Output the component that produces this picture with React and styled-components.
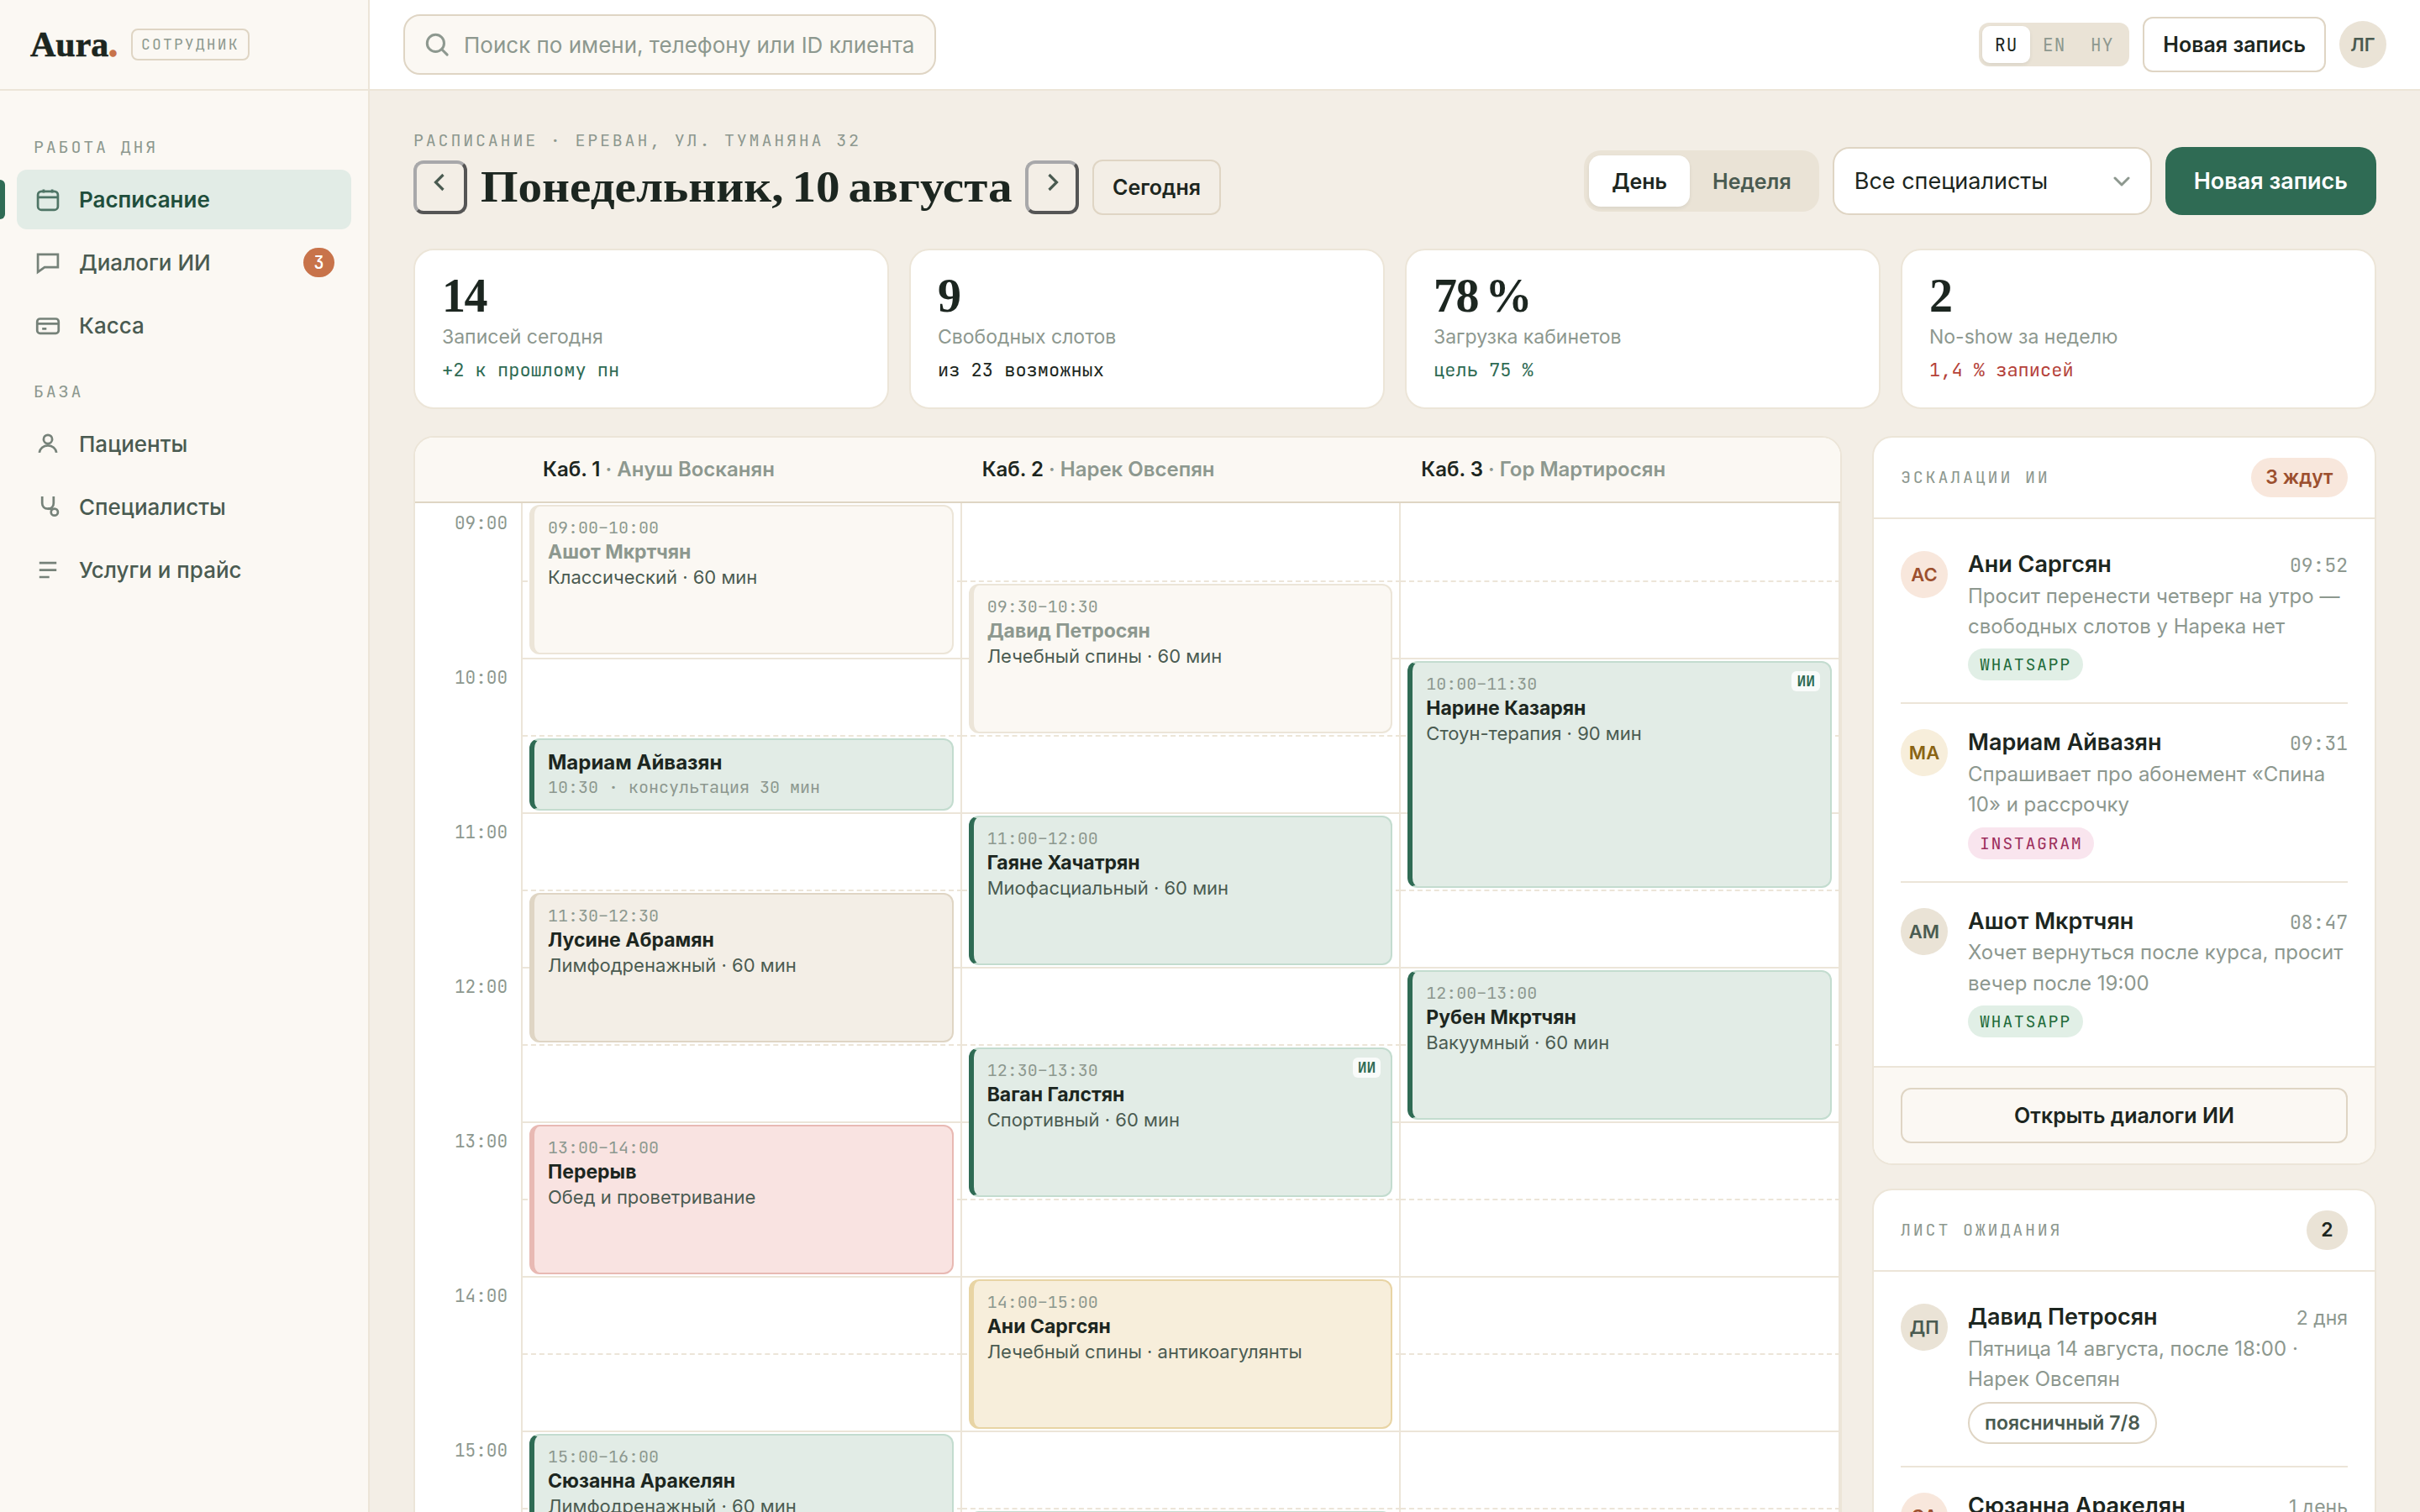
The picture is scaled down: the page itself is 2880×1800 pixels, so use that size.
import React, { useState } from 'react';
import styled, { createGlobalStyle, css } from 'styled-components';

const sans = "Inter, 'Noto Sans', sans-serif";
const mono = "'JetBrains Mono', 'DejaVu Sans Mono', monospace";
const serif = "'Liberation Serif', serif";

const c = {
  ink: '#1c2620',
  text: '#4a5b51',
  muted: '#8d988f',
  line: '#ece5d8',
  lineStrong: '#dfd5c4',
  paper: '#fbf8f3',
  sand: '#f3eee6',
  sandDark: '#eae3d6',
  green: '#2f6b54',
  greenDark: '#1f4e3c',
  greenSoft: '#e2ece6',
  clay: '#c8734a',
  claySoft: '#f8e7dc',
  clayDark: '#9c4f2e',
  red: '#b5423a',
};

const NAV = [
  {
    title: 'Работа дня',
    items: [
      { id: 'schedule', label: 'Расписание', icon: 'calendar' },
      { id: 'chats', label: 'Диалоги ИИ', icon: 'chat', count: 3 },
      { id: 'cash', label: 'Касса', icon: 'card' },
    ],
  },
  {
    title: 'База',
    items: [
      { id: 'patients', label: 'Пациенты', icon: 'user' },
      { id: 'staff', label: 'Специалисты', icon: 'stethoscope' },
      { id: 'services', label: 'Услуги и прайс', icon: 'list' },
    ],
  },
];

const STATS = [
  { value: '14', label: 'Записей сегодня', note: '+2 к прошлому пн', tone: 'good' },
  { value: '9', label: 'Свободных слотов', note: 'из 23 возможных' },
  { value: '78 %', label: 'Загрузка кабинетов', note: 'цель 75 %', tone: 'good' },
  { value: '2', label: 'No-show за неделю', note: '1,4 % записей', tone: 'bad' },
];

const HOURS = ['09:00', '10:00', '11:00', '12:00', '13:00', '14:00', '15:00', '16:00'];
const SLOTS = HOURS.flatMap((h) => [h, h.replace(':00', ':30')]);

// span — количество получасовых слотов
const ROOMS = [
  {
    name: 'Каб. 1',
    person: 'Ануш Восканян',
    events: {
      '09:00': { span: 2, kind: 'done', time: '09:00–10:00', name: 'Ашот Мкртчян', note: 'Классический · 60 мин' },
      '10:30': { span: 1, kind: 'active', name: 'Мариам Айвазян', short: '10:30 · консультация 30 мин' },
      '11:30': { span: 2, kind: 'plain', time: '11:30–12:30', name: 'Лусине Абрамян', note: 'Лимфодренажный · 60 мин' },
      '13:00': { span: 2, kind: 'break', time: '13:00–14:00', name: 'Перерыв', note: 'Обед и проветривание' },
      '15:00': { span: 2, kind: 'active', time: '15:00–16:00', name: 'Сюзанна Аракелян', note: 'Лимфодренажный · 60 мин' },
    },
  },
  {
    name: 'Каб. 2',
    person: 'Нарек Овсепян',
    events: {
      '09:30': { span: 2, kind: 'done', time: '09:30–10:30', name: 'Давид Петросян', note: 'Лечебный спины · 60 мин' },
      '11:00': { span: 2, kind: 'active', time: '11:00–12:00', name: 'Гаяне Хачатрян', note: 'Миофасциальный · 60 мин' },
      '12:30': { span: 2, kind: 'active', time: '12:30–13:30', name: 'Ваган Галстян', note: 'Спортивный · 60 мин', ai: true },
      '14:00': { span: 2, kind: 'warn', time: '14:00–15:00', name: 'Ани Саргсян', note: 'Лечебный спины · антикоагулянты' },
      '15:30': { span: 2, kind: 'active' },
    },
  },
  {
    name: 'Каб. 3',
    person: 'Гор Мартиросян',
    events: {
      '10:00': { span: 3, kind: 'active', time: '10:00–11:30', name: 'Нарине Казарян', note: 'Стоун-терапия · 90 мин', ai: true },
      '12:00': { span: 2, kind: 'active', time: '12:00–13:00', name: 'Рубен Мкртчян', note: 'Вакуумный · 60 мин' },
    },
  },
];

const ESCALATIONS = [
  { initials: 'АС', tone: 'clay', name: 'Ани Саргсян', time: '09:52', text: 'Просит перенести четверг на утро — свободных слотов у Нарека нет', channel: 'WhatsApp' },
  { initials: 'МА', tone: 'gold', name: 'Мариам Айвазян', time: '09:31', text: 'Спрашивает про абонемент «Спина 10» и рассрочку', channel: 'Instagram' },
  { initials: 'АМ', tone: 'sand', name: 'Ашот Мкртчян', time: '08:47', text: 'Хочет вернуться после курса, просит вечер после 19:00', channel: 'WhatsApp' },
];

const WAITING = [
  { initials: 'ДП', tone: 'sand', name: 'Давид Петросян', time: '2 дня', text: 'Пятница 14 августа, после 18:00 · Нарек Овсепян', tag: 'поясничный 7/8' },
  { initials: 'СА', tone: 'clay', name: 'Сюзанна Аракелян', time: '1 день', text: 'Любой вечер на этой неделе', tag: 'лимфодренаж' },
];

const ICONS = {
  calendar: (
    <>
      <rect x="3" y="4" width="14" height="13" rx="2.5" />
      <path d="M3 8.2h14M7 2.6V5M13 2.6V5" />
    </>
  ),
  chat: <path d="M3 4h14v9H7.7L3 16.4z" />,
  card: (
    <>
      <rect x="2.5" y="5" width="15" height="10.2" rx="2" />
      <path d="M2.5 8.4h15M6 12h3" />
    </>
  ),
  user: (
    <>
      <circle cx="10" cy="7" r="3" />
      <path d="M4 16.4c.4-3 2.9-5 6-5s5.6 2 6 5" />
    </>
  ),
  stethoscope: (
    <>
      <path d="M6 3v4.6c0 2.3 1.5 4 4 4s4-1.7 4-4V3" />
      <path d="M10 11.6h2.6" />
      <circle cx="14.6" cy="13.9" r="2.4" />
    </>
  ),
  list: <path d="M4 4.8h12M4 9.8h12M4 14.7h7" />,
};

const App = () => {
  const [page, setPage] = useState('schedule');
  const [view, setView] = useState('День');
  const [lang, setLang] = useState('RU');

  return (
    <>
      <GlobalStyle />
      <Shell>
        <Sidebar>
          <Brand>
            <Logo>
              Aura<LogoDot>.</LogoDot>
            </Logo>
            <RoleTag>Сотрудник</RoleTag>
          </Brand>
          <Nav>
            {NAV.map((group) => (
              <NavGroup key={group.title}>
                <NavTitle>{group.title}</NavTitle>
                {group.items.map((item) => (
                  <NavItem key={item.id} $active={page === item.id} onClick={() => setPage(item.id)}>
                    <NavIcon viewBox="0 0 20 20">{ICONS[item.icon]}</NavIcon>
                    {item.label}
                    {item.count && <NavCount>{item.count}</NavCount>}
                  </NavItem>
                ))}
              </NavGroup>
            ))}
          </Nav>
        </Sidebar>

        <Main>
          <Topbar>
            <Search>
              <SearchIcon viewBox="0 0 20 20">
                <circle cx="9" cy="9" r="6.3" />
                <path d="M13.6 13.6l4 4" />
              </SearchIcon>
              <SearchInput placeholder="Поиск по имени, телефону или ID клиента" />
            </Search>
            <TopActions>
              <LangSwitch>
                {['RU', 'EN', 'HY'].map((l) => (
                  <LangButton key={l} $active={lang === l} onClick={() => setLang(l)}>
                    {l}
                  </LangButton>
                ))}
              </LangSwitch>
              <OutlineButton>Новая запись</OutlineButton>
              <Avatar $tone="sand">ЛГ</Avatar>
            </TopActions>
          </Topbar>

          <Content>
            <PageHead>
              <div>
                <Crumbs>Расписание · Ереван, ул. Туманяна 32</Crumbs>
                <DateRow>
                  <ArrowButton aria-label="Предыдущий день">
                    <svg width="32" height="32" viewBox="0 0 32 32">
                      <path d="M19.5 7l-9 9 9 9" />
                    </svg>
                  </ArrowButton>
                  <Title>Понедельник, 10 августа</Title>
                  <ArrowButton aria-label="Следующий день">
                    <svg width="32" height="32" viewBox="0 0 32 32">
                      <path d="M12.5 7l9 9-9 9" />
                    </svg>
                  </ArrowButton>
                  <OutlineButton>Сегодня</OutlineButton>
                </DateRow>
              </div>
              <HeadActions>
                <ViewSwitch>
                  {['День', 'Неделя'].map((v) => (
                    <ViewButton key={v} $active={view === v} onClick={() => setView(v)}>
                      {v}
                    </ViewButton>
                  ))}
                </ViewSwitch>
                <SelectBox>
                  Все специалисты
                  <svg width="20" height="12" viewBox="0 0 20 12">
                    <path d="M2 2l8 8 8-8" />
                  </svg>
                </SelectBox>
                <PrimaryButton>Новая запись</PrimaryButton>
              </HeadActions>
            </PageHead>

            <Stats>
              {STATS.map((s) => (
                <StatCard key={s.label}>
                  <StatValue>{s.value}</StatValue>
                  <StatLabel>{s.label}</StatLabel>
                  <StatNote $tone={s.tone}>{s.note}</StatNote>
                </StatCard>
              ))}
            </Stats>

            <Board>
              <Schedule>
                <ScheduleHead>
                  <span />
                  {ROOMS.map((room) => (
                    <RoomHead key={room.name}>
                      {room.name} <span>· {room.person}</span>
                    </RoomHead>
                  ))}
                </ScheduleHead>
                <ScheduleBody>
                  <HourColumn>
                    {HOURS.map((h) => (
                      <Hour key={h}>{h}</Hour>
                    ))}
                  </HourColumn>
                  {ROOMS.map((room) => (
                    <RoomColumn key={room.name}>
                      {SLOTS.map((slot) => (
                        <Slot key={slot} $half={slot.endsWith('30')}>
                          {room.events[slot] && <EventCard event={room.events[slot]} />}
                        </Slot>
                      ))}
                    </RoomColumn>
                  ))}
                </ScheduleBody>
              </Schedule>

              <Aside>
                <Panel>
                  <PanelHead>
                    <PanelTitle>Эскалации ИИ</PanelTitle>
                    <Pill $tone="clay">3 ждут</Pill>
                  </PanelHead>
                  <PanelList>
                    {ESCALATIONS.map((p) => (
                      <Person key={p.name} person={p} />
                    ))}
                  </PanelList>
                  <PanelFoot>
                    <OutlineButton $block>Открыть диалоги ИИ</OutlineButton>
                  </PanelFoot>
                </Panel>
                <Panel>
                  <PanelHead>
                    <PanelTitle>Лист ожидания</PanelTitle>
                    <Pill>2</Pill>
                  </PanelHead>
                  <PanelList>
                    {WAITING.map((p) => (
                      <Person key={p.name} person={p} />
                    ))}
                  </PanelList>
                </Panel>
              </Aside>
            </Board>
          </Content>
        </Main>
      </Shell>
    </>
  );
};

const EventCard = ({ event }) => (
  <Event $kind={event.kind} $span={event.span} $short={Boolean(event.short)}>
    {event.time && <EventTime>{event.time}</EventTime>}
    {event.name && (
      <EventName $muted={event.kind === 'done'} $short={Boolean(event.short)}>
        {event.name}
      </EventName>
    )}
    {event.note && <EventNote>{event.note}</EventNote>}
    {event.short && <EventTime>{event.short}</EventTime>}
    {event.ai && <AiBadge>ИИ</AiBadge>}
  </Event>
);

const Person = ({ person }) => (
  <PersonRow>
    <PersonAvatar $tone={person.tone}>{person.initials}</PersonAvatar>
    <PersonBody>
      <PersonTop>
        <PersonName>{person.name}</PersonName>
        <PersonTime $mono={person.time.includes(':')}>{person.time}</PersonTime>
      </PersonTop>
      <PersonText>{person.text}</PersonText>
      {person.channel && <Channel $name={person.channel}>{person.channel}</Channel>}
      {person.tag && <Tag>{person.tag}</Tag>}
    </PersonBody>
  </PersonRow>
);

const GlobalStyle = createGlobalStyle`
  * {
    box-sizing: border-box;
  }

  body {
    margin: 0;
    font-family: ${sans};
    color: ${c.ink};
    background: ${c.sand};
    overflow: hidden;
    -webkit-font-smoothing: antialiased;
  }

  button, input {
    font-family: inherit;
    color: inherit;
  }
`;

const Shell = styled.div`
  display: flex;
  height: 100vh;
  overflow: hidden;
`;

const Sidebar = styled.aside`
  flex: none;
  width: 440px;
  background: ${c.paper};
  border-right: 2px solid ${c.line};
`;

const Brand = styled.div`
  display: flex;
  align-items: center;
  gap: 18px;
  height: 108px;
  padding: 0 36px;
  border-bottom: 2px solid ${c.line};
`;

const Logo = styled.div`
  font-family: ${serif};
  font-size: 42px;
  font-weight: 700;
  line-height: 48px;
  width: 102px;
  -webkit-text-stroke: 0.6px currentColor;
`;

const LogoDot = styled.span`
  color: ${c.clay};
  -webkit-text-stroke: 1.6px currentColor;
`;

const RoleTag = styled.span`
  font-family: ${mono};
  font-size: 18px;
  line-height: 34px;
  letter-spacing: 0.12em;
  text-transform: uppercase;
  color: ${c.muted};
  padding: 0 10px;
  border: 2px solid ${c.lineStrong};
  border-radius: 8px;
`;

const Nav = styled.nav`
  padding: 52px 20px 0;
`;

const NavGroup = styled.div`
  display: flex;
  flex-direction: column;
  gap: 4px;
  margin-bottom: 27px;
`;

const NavTitle = styled.div`
  font-family: ${mono};
  font-size: 20px;
  line-height: 30px;
  letter-spacing: 0.14em;
  text-transform: uppercase;
  color: ${c.muted};
  padding: 0 20px;
  margin-bottom: 8px;
`;

const NavItem = styled.button`
  position: relative;
  display: flex;
  align-items: center;
  gap: 20px;
  height: 71.2px;
  padding: 0 20px;
  border: 0;
  border-radius: 12px;
  font-size: 26px;
  font-weight: 500;
  color: ${c.text};
  background: transparent;

  ${({ $active }) =>
    $active &&
    css`
      color: ${c.greenDark};
      font-weight: 600;
      background: ${c.greenSoft};

      &::before {
        content: '';
        position: absolute;
        left: -20px;
        top: 12px;
        bottom: 12px;
        width: 6px;
        background: ${c.green};
        border-radius: 0 6px 6px 0;
      }
    `}
`;

const NavIcon = styled.svg`
  width: 34px;
  height: 34px;
  fill: none;
  stroke: currentColor;
  stroke-width: 1.6;
  opacity: 0.75;
`;

const NavCount = styled.span`
  margin-left: auto;
  min-width: 37px;
  height: 35px;
  border-radius: 18px;
  background: ${c.clay};
  color: #fff;
  font-family: ${mono};
  font-size: 21px;
  line-height: 35px;
  text-align: center;
`;

const Main = styled.main`
  flex: 1;
  min-width: 0;
  display: flex;
  flex-direction: column;
`;

const Topbar = styled.header`
  flex: none;
  display: flex;
  align-items: center;
  justify-content: space-between;
  height: 108px;
  padding: 0 40px;
  background: #fff;
  border-bottom: 2px solid ${c.line};
`;

const Search = styled.label`
  display: flex;
  align-items: center;
  gap: 16px;
  width: 634px;
  height: 72px;
  padding: 0 22px;
  background: ${c.paper};
  border: 2px solid ${c.lineStrong};
  border-radius: 20px;
`;

const SearchIcon = styled.svg`
  flex: none;
  width: 32px;
  height: 32px;
  fill: none;
  stroke: ${c.muted};
  stroke-width: 1.9;
  stroke-linecap: round;
`;

const SearchInput = styled.input`
  flex: 1;
  min-width: 0;
  padding: 0;
  border: 0;
  outline: 0;
  background: transparent;
  font-size: 26px;

  &::placeholder {
    color: ${c.muted};
  }
`;

const TopActions = styled.div`
  display: flex;
  align-items: center;
  gap: 16px;
`;

const LangSwitch = styled.div`
  display: flex;
  padding: 4px;
  background: ${c.sandDark};
  border-radius: 12px;
`;

const LangButton = styled.button`
  width: 57px;
  height: 44px;
  padding: 0;
  border: 0;
  border-radius: 9px;
  font-family: ${mono};
  font-size: 21px;
  letter-spacing: 0.06em;
  color: ${({ $active }) => ($active ? c.ink : c.muted)};
  background: ${({ $active }) => ($active ? '#fff' : 'transparent')};
  box-shadow: ${({ $active }) => ($active ? '0 2px 4px rgba(28, 38, 32, 0.08)' : 'none')};
`;

const OutlineButton = styled.button`
  width: ${({ $block }) => ($block ? '100%' : 'auto')};
  height: 66px;
  padding: 0 22px;
  border: 2px solid ${c.lineStrong};
  border-radius: 12px;
  background: transparent;
  font-size: 25px;
  font-weight: 600;
  white-space: nowrap;
`;

const tones = {
  sand: css`
    background: ${c.sandDark};
    color: ${c.text};
  `,
  clay: css`
    background: ${c.claySoft};
    color: ${c.clayDark};
  `,
  gold: css`
    background: #f7eedb;
    color: #8a6414;
  `,
};

const Avatar = styled.span`
  flex: none;
  display: flex;
  align-items: center;
  justify-content: center;
  width: 56px;
  height: 56px;
  border-radius: 50%;
  font-size: 22px;
  font-weight: 600;
  ${({ $tone }) => tones[$tone]}
`;

const Content = styled.div`
  flex: 1;
  min-height: 0;
  display: flex;
  flex-direction: column;
  padding: 42px 52px 0;
`;

const PageHead = styled.div`
  flex: none;
  display: flex;
  justify-content: space-between;
  align-items: flex-end;
  height: 106px;
  margin-bottom: 40px;
`;

const Crumbs = styled.div`
  font-family: ${mono};
  font-size: 20px;
  line-height: 32px;
  letter-spacing: 0.14em;
  text-transform: uppercase;
  color: ${c.muted};
  margin-bottom: 7px;
`;

const DateRow = styled.div`
  display: flex;
  align-items: center;
  gap: 16px;
`;

const ArrowButton = styled.button`
  display: flex;
  justify-content: center;
  align-items: flex-start;
  width: 64px;
  height: 64px;
  padding: 6px 0 0;
  background: transparent;
  border: 4px solid;
  border-color: #a8a8aa #555 #555 #a8a8aa;
  border-radius: 12px;

  svg {
    fill: none;
    stroke: ${c.text};
    stroke-width: 3.2;
  }
`;

const Title = styled.h1`
  margin: 0;
  width: 632px;
  font-family: ${serif};
  font-size: 52px;
  font-weight: 700;
  line-height: 64px;
  word-spacing: -4px;
  white-space: nowrap;
  transform: scaleX(1.1);
  transform-origin: left center;
`;

const HeadActions = styled.div`
  display: flex;
  align-items: center;
  gap: 16px;
`;

const ViewSwitch = styled.div`
  display: flex;
  padding: 6px;
  background: ${c.sandDark};
  border-radius: 20px;
`;

const ViewButton = styled.button`
  height: 61px;
  padding: 0 27px;
  border: 0;
  border-radius: 14px;
  font-size: 25px;
  font-weight: 600;
  color: ${({ $active }) => ($active ? c.ink : c.text)};
  background: ${({ $active }) => ($active ? '#fff' : 'transparent')};
  box-shadow: ${({ $active }) => ($active ? '0 2px 4px rgba(28, 38, 32, 0.08)' : 'none')};
`;

const SelectBox = styled.div`
  display: flex;
  align-items: center;
  justify-content: space-between;
  width: 380px;
  height: 81px;
  padding: 0 24px;
  background: #fff;
  border: 2px solid ${c.lineStrong};
  border-radius: 20px;
  font-size: 27px;

  svg {
    fill: none;
    stroke: ${c.muted};
    stroke-width: 3;
    stroke-linecap: round;
    stroke-linejoin: round;
  }
`;

const PrimaryButton = styled.button`
  height: 81px;
  padding: 0 34px;
  border: 0;
  border-radius: 20px;
  background: ${c.green};
  color: #fff;
  font-size: 27px;
  font-weight: 600;
  white-space: nowrap;
`;

const Stats = styled.div`
  flex: none;
  display: grid;
  grid-template-columns: repeat(4, 1fr);
  gap: 24px;
  margin-bottom: 32px;
`;

const StatCard = styled.div`
  height: 191px;
  padding: 22px 32px 0;
  background: #fff;
  border: 2px solid ${c.line};
  border-radius: 24px;
`;

const StatValue = styled.div`
  font-family: ${serif};
  font-size: 56px;
  font-weight: 700;
  line-height: 64px;
  letter-spacing: -1.5px;
  word-spacing: -4px;
`;

const StatLabel = styled.div`
  font-size: 23px;
  line-height: 34px;
  color: ${c.muted};
`;

const noteColors = { good: c.green, bad: c.red };

const StatNote = styled.div`
  margin-top: 6px;
  font-family: ${mono};
  font-size: 22px;
  line-height: 34px;
  color: ${({ $tone }) => noteColors[$tone] || c.ink};
`;

const Board = styled.div`
  flex: 1;
  min-height: 0;
  display: grid;
  grid-template-columns: 1fr 600px;
  gap: 36px;
  align-items: start;
`;

const Schedule = styled.section`
  background: #fff;
  border: 2px solid ${c.line};
  border-radius: 24px;
  overflow: hidden;
`;

const ScheduleHead = styled.div`
  display: grid;
  grid-template-columns: 128px repeat(3, 1fr);
  align-items: center;
  height: 78px;
  padding-bottom: 1px;
  background: ${c.paper};
  border-bottom: 2px solid ${c.lineStrong};
`;

const RoomHead = styled.div`
  padding: 0 24px;
  font-size: 24px;
  font-weight: 600;

  span {
    color: ${c.muted};
  }
`;

const ScheduleBody = styled.div`
  display: grid;
  grid-template-columns: 128px repeat(3, 1fr);
`;

const HourColumn = styled.div`
  border-right: 2px solid ${c.line};
`;

const Hour = styled.div`
  height: 184px;
  padding: 9px 16px 0;
  font-family: ${mono};
  font-size: 21px;
  line-height: 30px;
  text-align: right;
  color: ${c.muted};
`;

const RoomColumn = styled.div`
  min-width: 0;
`;

const Slot = styled.div`
  position: relative;
  height: 92px;
  border-right: 2px solid ${c.line};
  border-top: 2px ${({ $half }) => ($half ? 'dashed' : 'solid')} ${c.line};

  &:first-child {
    border-top: 0;
  }
`;

const kinds = {
  done: [c.paper, c.line, c.line],
  active: [c.greenSoft, '#c3dccf', c.green],
  plain: [c.sand, c.lineStrong, c.lineStrong],
  break: ['#f9e3e1', '#e8b9b3', '#e8b9b3'],
  warn: ['#f7eedb', '#e8d4a4', '#e8d4a4'],
};

const Event = styled.article`
  position: absolute;
  z-index: 1;
  top: 2px;
  left: 8px;
  right: 8px;
  height: ${({ $span }) => $span * 92 - 6}px;
  padding: ${({ $short }) => ($short ? '12px' : '11px')} 16px 0;
  border: 2px solid ${({ $kind }) => kinds[$kind][1]};
  border-left: 6px solid ${({ $kind }) => kinds[$kind][2]};
  border-radius: 12px;
  background: ${({ $kind }) => kinds[$kind][0]};
  overflow: hidden;
`;

const EventTime = styled.div`
  font-family: ${mono};
  font-size: 20px;
  line-height: 28px;
  color: ${c.muted};
`;

const EventName = styled.div`
  font-size: ${({ $short }) => ($short ? 24 : 23)}px;
  font-weight: 700;
  line-height: 30px;
  color: ${({ $muted }) => ($muted ? c.muted : c.ink)};
`;

const EventNote = styled.div`
  font-size: 22px;
  line-height: 31px;
  color: ${c.text};
`;

const AiBadge = styled.span`
  position: absolute;
  top: 10px;
  right: 12px;
  padding: 0 6px;
  border-radius: 6px;
  background: rgba(255, 255, 255, 0.8);
  font-family: ${mono};
  font-size: 18px;
  font-weight: 700;
  line-height: 24px;
  color: ${c.green};
`;

const Aside = styled.div`
  display: flex;
  flex-direction: column;
  gap: 28px;
`;

const Panel = styled.section`
  background: #fff;
  border: 2px solid ${c.line};
  border-radius: 24px;
  overflow: hidden;
`;

const PanelHead = styled.div`
  display: flex;
  align-items: center;
  justify-content: space-between;
  height: 97px;
  padding: 0 32px;
  border-bottom: 2px solid ${c.line};
`;

const PanelTitle = styled.h2`
  margin: 0;
  padding-bottom: 2px;
  font-family: ${mono};
  font-size: 20px;
  font-weight: 400;
  letter-spacing: 0.14em;
  text-transform: uppercase;
  color: ${c.muted};
`;

const Pill = styled.span`
  padding: 0 17.5px;
  border-radius: 24px;
  font-size: 23px;
  font-weight: 600;
  line-height: 47px;
  background: ${c.sandDark};
  ${({ $tone }) => $tone && tones[$tone]}
`;

const PanelList = styled.div`
  padding: 8px 32px;
`;

const PersonRow = styled.div`
  display: flex;
  gap: 24px;
  padding: 26px 0;

  & + & {
    border-top: 2px solid ${c.line};
  }
`;

const PersonAvatar = styled(Avatar)`
  margin-top: 4px;
`;

const PersonBody = styled.div`
  flex: 1;
  min-width: 0;
`;

const PersonTop = styled.div`
  display: flex;
  justify-content: space-between;
  align-items: baseline;
  height: 39.7px;
  line-height: 39px;
`;

const PersonName = styled.span`
  font-size: 27px;
  font-weight: 600;
`;

const PersonTime = styled.span`
  font-family: ${({ $mono }) => ($mono ? mono : sans)};
  font-size: 23px;
  color: ${c.muted};
`;

const PersonText = styled.div`
  font-size: 24px;
  line-height: 36.2px;
  color: ${c.muted};
`;

const Channel = styled.div`
  width: fit-content;
  margin-top: 8.3px;
  padding: 0 14px;
  border-radius: 19px;
  font-family: ${mono};
  font-size: 20px;
  line-height: 38px;
  letter-spacing: 0.08em;
  text-transform: uppercase;
  color: ${({ $name }) => ($name === 'WhatsApp' ? '#1f6b3a' : '#9c2f5c')};
  background: ${({ $name }) => ($name === 'WhatsApp' ? '#e1efe6' : '#f9e5ee')};
`;

const Tag = styled.div`
  width: fit-content;
  margin-top: 8.5px;
  padding: 0 18px;
  border: 2px solid ${c.lineStrong};
  border-radius: 25px;
  font-size: 23px;
  font-weight: 600;
  line-height: 46px;
  color: ${c.text};
`;

const PanelFoot = styled.div`
  padding: 24px 32px;
  background: ${c.paper};
  border-top: 2px solid ${c.line};
`;

export default App;
